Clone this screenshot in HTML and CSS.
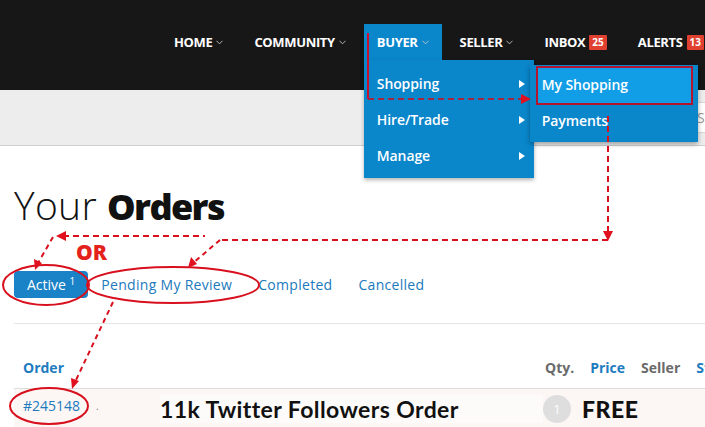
FILE: index.html
```html
<!DOCTYPE html>
<html lang="en">
<head>
<meta charset="utf-8">
<title>Your Orders</title>
<link rel="stylesheet" href="styles.css">
</head>
<body>
<div class="page">
  <header class="topbar">
    <ul class="nav">
      <li class="nav-item"><span>HOME</span><svg class="chev" viewBox="0 0 8 5"><polyline points="0.5,0.5 4,4 7.5,0.5"/></svg></li>
      <li class="nav-item"><span>COMMUNITY</span><svg class="chev" viewBox="0 0 8 5"><polyline points="0.5,0.5 4,4 7.5,0.5"/></svg></li>
      <li class="nav-item active"><span>BUYER</span><svg class="chev" viewBox="0 0 8 5"><polyline points="0.5,0.5 4,4 7.5,0.5"/></svg>
        <div class="dropdown">
          <div class="dd-item">Shopping<i class="tri"></i>
            <div class="submenu">
              <div class="sub-item hl">My Shopping</div>
              <div class="sub-item">Payments</div>
            </div>
          </div>
          <div class="dd-item">Hire/Trade<i class="tri"></i></div>
          <div class="dd-item">Manage<i class="tri"></i></div>
        </div>
      </li>
      <li class="nav-item"><span>SELLER</span><svg class="chev" viewBox="0 0 8 5"><polyline points="0.5,0.5 4,4 7.5,0.5"/></svg></li>
      <li class="nav-item"><span>INBOX</span><b class="badge">25</b></li>
      <li class="nav-item"><span>ALERTS</span><b class="badge">13</b></li>
    </ul>
  </header>
  <div class="subbar"><input class="search" type="text" placeholder="Search"></div>
  <main class="content">
    <h1 class="title"><span class="light">Your</span> <b class="bold">Orders</b></h1>
    <nav class="tabs">
      <a class="tab on">Active <sup>1</sup></a>
      <a class="tab">Pending My Review</a>
      <a class="tab">Completed</a>
      <a class="tab">Cancelled</a>
    </nav>
    <div class="rule"></div>
    <div class="thead">
      <div class="th-order">Order</div>
      <div class="th gray">Qty.</div>
      <div class="th">Price</div>
      <div class="th gray">Seller</div>
      <div class="th">Status</div>
    </div>
    <div class="trow">
      <div class="td-order">#245148</div>
      <div class="td-dot">.</div>
      <div class="td-title">11k Twitter Followers Order</div>
      <div class="td-qty"><span class="qty">1</span></div>
      <div class="td-price">FREE</div>
    </div>
  </main>
  <svg class="annot" width="705" height="427" viewBox="0 0 705 427">
    <g fill="none" stroke-width="2">
      <line x1="368" y1="33" x2="368" y2="99" stroke="#c8102e"/>
      <line x1="368" y1="99" x2="522" y2="99" stroke="#a5243f" stroke-dasharray="6 4"/>
      <rect x="537" y="67" width="155" height="37" stroke="#b5142f"/>
      <line x1="608" y1="116" x2="608" y2="232" stroke="#d8101e" stroke-dasharray="6 4"/>
      <line x1="222" y1="240" x2="608" y2="240" stroke="#d8101e" stroke-dasharray="6 4"/>
      <line x1="220" y1="240" x2="193" y2="263" stroke="#d8101e" stroke-dasharray="5 4"/>
      <line x1="63" y1="236" x2="205" y2="236" stroke="#d8101e" stroke-dasharray="6 4"/>
      <line x1="53" y1="237" x2="38" y2="263" stroke="#d8101e" stroke-dasharray="5 4"/>
      <line x1="113" y1="302" x2="76" y2="380" stroke="#d8101e" stroke-dasharray="5 4"/>
      <ellipse cx="46" cy="285" rx="43" ry="20" stroke="#d8101e"/>
      <ellipse cx="173" cy="285" rx="86" ry="18" stroke="#d8101e"/>
      <ellipse cx="49" cy="406" rx="39" ry="18" stroke="#d8101e"/>
    </g>
    <g fill="#e0101e">
      <polygon points="531,99 521,94 521,104"/>
      <polygon points="608,241 603,231 613,231"/>
      <polygon points="188,268 191,257 197,264"/>
      <polygon points="56,236 66,231 66,241"/>
      <polygon points="35,270 34,259 42,263"/>
      <polygon points="72,389 71,378 79,381"/>
    </g>
    <text x="76" y="260" class="or">OR</text>
  </svg>
</div>
</body>
</html>
```
FILE: styles.css
```css
* { box-sizing: border-box; }
html, body { margin: 0; padding: 0; }
body {
  width: 705px;
  height: 427px;
  overflow: hidden;
  background: #fff;
  font-family: "Open Sans", "Liberation Sans", sans-serif;
}
.page { position: relative; width: 705px; height: 427px; overflow: hidden; }

.topbar { height: 90px; background: #171717; }
.nav {
  list-style: none;
  margin: 0;
  padding: 24px 0 0 161px;
  display: flex;
  gap: 5px;
  white-space: nowrap;
}
.nav-item {
  position: relative;
  flex-shrink: 0;
  height: 36px;
  padding: 0 13px;
  display: flex;
  align-items: center;
  color: #fff;
  font-size: 13px;
  font-weight: 700;
  letter-spacing: -0.35px;
}
.nav-item.active { background: #0a86cb; }
.chev { width: 7px; height: 5px; margin-left: 4px; margin-top: 1px; }
.chev polyline { fill: none; stroke: #c9c9c9; stroke-width: 1; }
.badge {
  margin-left: 4px;
  background: #e0402f;
  color: #fff;
  font-size: 10px;
  font-weight: 700;
  height: 15px;
  line-height: 15px;
  padding: 0 3px;
  border-radius: 1px;
  letter-spacing: 0;
}

.dropdown {
  position: absolute;
  top: 36px;
  left: 0;
  width: 170px;
  padding: 6px 0 4px;
  background: #0a86cb;
  box-shadow: 0 2px 4px rgba(0,0,0,0.3);
  z-index: 5;
}
.dd-item {
  position: relative;
  height: 36px;
  line-height: 36px;
  padding-left: 13px;
  font-size: 14px;
  font-weight: 600;
  color: #fff;
  letter-spacing: -0.1px;
}
.tri {
  position: absolute;
  right: 9px;
  top: 14px;
  width: 0; height: 0;
  border-left: 6px solid #fff;
  border-top: 4.5px solid transparent;
  border-bottom: 4.5px solid transparent;
}
.submenu {
  position: absolute;
  left: 166px;
  top: -1px;
  width: 168px;
  padding: 2px 0 3px;
  background: #0a86cb;
  box-shadow: 0 2px 5px rgba(0,0,0,0.35);
}
.sub-item {
  height: 36px;
  line-height: 36px;
  padding-left: 12px;
  font-size: 14px;
  font-weight: 600;
  color: #fff;
}
.sub-item.hl {
  background: #119ee6;
  margin: 0 6px 0 7px;
  padding-left: 5px;
}

.subbar {
  height: 56px;
  background: #ededed;
  border-bottom: 1px solid #cfcfcf;
  display: flex;
  align-items: center;
  padding-left: 690px;
}
.search {
  flex-shrink: 0;
  width: 220px;
  height: 31px;
  border: 1px solid #d8d8d8;
  background: #fff;
  font: 14px "Open Sans", sans-serif;
  padding: 0 6px;
  outline: none;
}
.search::placeholder { color: #999; }

.content { padding: 35px 0 0 14px; }
.title {
  margin: 0;
  font-size: 39px;
  line-height: 48px;
  color: #111;
  font-weight: 700;
}
.title .light { font-weight: 300; letter-spacing: 0.3px; }
.title .bold { letter-spacing: -1.6px; font-size: 36px; }
.tabs {
  margin-top: 40px;
  display: flex;
  height: 27px;
}
.tab {
  padding: 0 13px;
  height: 27px;
  line-height: 27px;
  font-size: 14px;
  letter-spacing: 0.3px;
  color: #2079bd;
  border-radius: 4px;
  white-space: nowrap;
}
.tab.on { background: #1a82c6; color: #fff; letter-spacing: 0; }
.tab sup { font-size: 10px; vertical-align: 0; position: relative; top: -5px; }
.rule { margin-top: 25px; height: 1px; background: #e6e6e6; }

.thead {
  margin-top: 34px;
  display: flex;
  gap: 16px;
  height: 31px;
  border-bottom: 1px solid #dcdcdc;
  font-size: 14px;
  font-weight: 700;
  line-height: 20px;
  color: #1d7cc0;
  white-space: nowrap;
}
.th-order { width: 515px; padding-left: 9px; flex-shrink: 0; }
.th { flex-shrink: 0; }
.th.gray { color: #6a6a6a; }

.trow {
  display: grid;
  grid-template-columns: 82px 64px 383px 39px auto;
  align-items: center;
  height: 40px;
  background: #fcf7f5;
  white-space: nowrap;
}
.td-order { padding-left: 9px; font-size: 14px; color: #2079bd; margin-top: -7px; }
.td-dot { font-size: 10px; color: #777; margin-top: -6px; }
.td-title {
  font-family: Lato, "Liberation Sans", sans-serif;
  font-weight: 700;
  font-size: 23px;
  letter-spacing: 0.4px;
  color: #111;
  background: #fdfbfa;
}
.qty {
  display: flex;
  width: 28px;
  height: 28px;
  border-radius: 50%;
  background: #dedede;
  color: #fff;
  font-size: 13px;
  align-items: center;
  justify-content: center;
}
.td-price {
  font-family: Lato, "Liberation Sans", sans-serif;
  font-weight: 900;
  font-size: 23px;
  letter-spacing: 0.5px;
  color: #111;
}

.annot { position: absolute; left: 0; top: 0; z-index: 10; pointer-events: none; }
.or { font-family: "Open Sans", sans-serif; font-weight: 800; font-size: 21px; fill: #e4221c; }
```
